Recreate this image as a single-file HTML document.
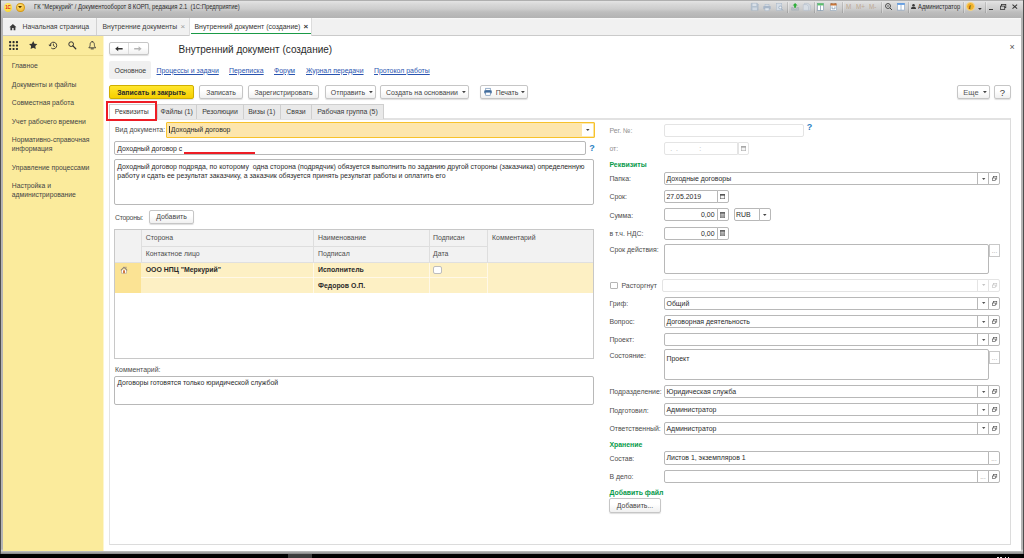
<!DOCTYPE html><html lang="ru"><head><meta charset="utf-8"><title>Внутренний документ (создание)</title><style>
*{box-sizing:border-box;margin:0;padding:0}
html,body{width:1024px;height:558px;overflow:hidden;background:#000}
body{font-family:"Liberation Sans",sans-serif;font-size:6.93px;color:#333;position:relative}
.a{position:absolute;white-space:nowrap}
.t{position:absolute;white-space:nowrap;line-height:10px;height:10px}
.inp{position:absolute;border:1px solid #b8b8b8;border-radius:2px;background:#fff;height:13px;line-height:11px;padding-left:1.5px;white-space:nowrap;overflow:hidden;color:#2b2b2b}
.btn{position:absolute;border:1px solid #c6c6c6;border-radius:2px;background:linear-gradient(#fff 40%,#f0f0f0);height:14px;line-height:12px;text-align:center;white-space:nowrap;color:#444;box-shadow:0 1px 1px rgba(0,0,0,.13)}
.sb{position:absolute;border:1px solid #b8b8b8;background:#fff;height:13px;width:12px;font-size:6px;line-height:8px;text-align:center;color:#555;letter-spacing:.2px}
.lbl{position:absolute;white-space:nowrap;line-height:10px;height:10px;color:#4d4d4d}
.grn{position:absolute;white-space:nowrap;line-height:10px;height:10px;color:#079a4b;font-weight:bold}
.lnk{position:absolute;white-space:nowrap;line-height:10px;height:10px;color:#2a55b0;text-decoration:underline}
.tab{position:absolute;top:104px;height:15px;border:1px solid #cfcfcf;border-bottom:none;background:#e9e9e9;line-height:14px;text-align:center;color:#3a3a3a}
.side{position:absolute;left:11.8px;white-space:nowrap;line-height:8.6px;color:#444;font-size:6.8px}
svg{position:absolute;overflow:visible}
</style></head><body>
<div class="a" style="left:0;top:0;width:1024px;height:553.5px;background:#4e4e4e"></div>
<div class="a" style="left:1.2px;top:0;width:1021.5px;height:553.5px;background:linear-gradient(#b4b4b4 549px,#cfcfcf 550.5px,#8e8e8e 553.5px)"></div>
<div class="a" style="left:1.2px;top:0;width:1021.5px;height:18.3px;background:linear-gradient(#7a7a7a,#e4e4e4 1px,#d9d9d9 4px,#cdcdcd 9px,#bebebe 12px,#b3b3b3 18px)"></div>
<div class="a" style="left:4px;top:2.5px;width:8px;height:9px;border-radius:50%;background:radial-gradient(circle at 40% 35%,#fff27a,#f8cf1c)"></div>
<div class="t" style="left:5.2px;top:2.9px;font-size:4.5px;font-weight:bold;color:#e0201c;letter-spacing:-.3px">1С</div>
<div class="a" style="left:16px;top:2.5px;width:8.5px;height:9px;border-radius:50%;background:radial-gradient(circle at 40% 30%,#ffe27a,#efaf22);border:.5px solid #d39a1a"></div>
<svg style="left:18.3px;top:6.1px" width="4" height="2.3" viewBox="0 0 4 2.3"><path d="M0 0 H4 L2 2.3 Z" fill="#4a3000"/></svg>
<div class="t" style="left:33.5px;top:2px;font-size:7px;color:#2a2a2a;transform-origin:0 50%;transform:scaleX(.838)">ГК "Меркурий" / Документооборот 8 КОРП, редакция 2.1&nbsp; (1С:Предприятие)</div>
<div class="t" style="left:918.2px;top:2px;font-size:7px;color:#2a2a2a;transform-origin:0 50%;transform:scaleX(.835)">Администратор</div>
<svg style="left:751px;top:3.4px" width="7.4" height="7.5" viewBox="0 0 15 15"><path d="M.5 .5 H12.5 L14.5 2.5 V14.5 H.5 Z" fill="#b4c1cf" stroke="#9eb0c2"/><rect x="3" y="1" width="8" height="5" fill="#d9e0e8"/><rect x="3" y="9" width="9" height="5.5" fill="#cfd8e2"/></svg>
<svg style="left:763px;top:3.8px" width="8" height="7" viewBox="0 0 16 14"><rect x="4" y=".5" width="8" height="4" fill="#d3dbe4" stroke="#a9b7c7"/><rect x=".5" y="4" width="15" height="6.5" rx="1.5" fill="#a7b6c8"/><rect x="4" y="8" width="8" height="5.5" fill="#dfe5eb" stroke="#a9b7c7"/></svg>
<svg style="left:776px;top:3.4px" width="7.5" height="8" viewBox="0 0 15 16"><rect x=".5" y=".5" width="11" height="14" fill="#d5dde6" stroke="#a9b7c7"/><circle cx="8.5" cy="9" r="3" fill="#e8edf2" stroke="#8fa2b6" stroke-width="1.3"/><path d="M10.8 11.5 L14 15" stroke="#8fa2b6" stroke-width="1.7"/></svg>
<div class="a" style="left:786.5px;top:2px;width:1px;height:11px;background:rgba(0,0,0,.13);box-shadow:1px 0 0 rgba(255,255,255,.3)"></div>
<svg style="left:790.5px;top:3px" width="8.2" height="8" viewBox="0 0 16 16"><path d="M1 9 V14.5 H15 V9 L12 9 L10.5 12 H5.5 L4 9 Z" fill="#b9bfc6" stroke="#9aa3ad" stroke-width=".8"/><path d="M8 0 L13 5 H10 V9.5 H6 V5 H3 Z" fill="#2fae3b"/></svg>
<svg style="left:802.5px;top:3.4px" width="8" height="7.6" viewBox="0 0 16 15"><path d="M3 .5 H10 L15 5 V14.5 H3 Z" fill="#cfd6de" stroke="#b3bdc8"/><path d="M.5 3 H7 L11 7 V14.5 H.5 Z" fill="#d8dee5" stroke="#b3bdc8"/></svg>
<div class="a" style="left:814px;top:2px;width:1px;height:11px;background:rgba(0,0,0,.13);box-shadow:1px 0 0 rgba(255,255,255,.3)"></div>
<svg style="left:817px;top:3px" width="7" height="7.8" viewBox="0 0 14 16"><rect x=".6" y=".6" width="12.8" height="14.8" fill="#fff" stroke="#6f8ba3" stroke-width="1.2"/><rect x=".6" y=".6" width="12.8" height="4.4" fill="#5cc06a"/><path d="M7 5 V15.4" stroke="#6f8ba3" stroke-width="1.4"/></svg>
<svg style="left:830px;top:3px" width="7" height="7.8" viewBox="0 0 14 16"><rect x=".6" y="1.6" width="12.8" height="13.8" fill="#fff" stroke="#8aa0b6" stroke-width="1.2"/><rect x=".6" y="1" width="12.8" height="4.2" fill="#c9773a"/><path d="M4 7 V12 H10 V7" fill="none" stroke="#6f8ba3" stroke-width="1.4"/><path d="M3.5 0 V2.5 M10.5 0 V2.5" stroke="#a0551f" stroke-width="1.3"/></svg>
<div class="a" style="left:841.5px;top:2px;width:1px;height:11px;background:rgba(0,0,0,.13);box-shadow:1px 0 0 rgba(255,255,255,.3)"></div>
<div class="t" style="left:845.8px;top:2px;font-size:7px;color:#bfa992;transform-origin:0 50%;transform:scaleX(.9)">M</div>
<div class="t" style="left:856.4px;top:2px;font-size:7px;color:#bfa992;transform-origin:0 50%;transform:scaleX(.9)">M+</div>
<div class="t" style="left:868.8px;top:2px;font-size:7px;color:#bfa992;transform-origin:0 50%;transform:scaleX(.9)">M-</div>
<div class="a" style="left:880.5px;top:2px;width:1px;height:11px;background:rgba(0,0,0,.13);box-shadow:1px 0 0 rgba(255,255,255,.3)"></div>
<svg style="left:884.5px;top:3px" width="7.5" height="7.5" viewBox="0 0 15 15"><circle cx="6" cy="6" r="4.8" fill="#fff" stroke="#3a3a3a" stroke-width="2"/><path d="M3.5 6 H8.5 M6 3.5 V8.5" stroke="#444" stroke-width="1.3"/><path d="M10 10 L14 14" stroke="#444" stroke-width="2"/></svg>
<svg style="left:896.6px;top:3px" width="8" height="7.4" viewBox="0 0 16 15"><rect x=".6" y=".6" width="14.8" height="13.8" fill="#fff" stroke="#7f9dc0" stroke-width="1.2"/><rect x=".6" y=".6" width="14.8" height="3" fill="#4a90e2"/><path d="M8 3 V14.4" stroke="#7f9dc0" stroke-width="1.4"/></svg>
<div class="a" style="left:908px;top:2px;width:1px;height:11px;background:rgba(0,0,0,.13);box-shadow:1px 0 0 rgba(255,255,255,.3)"></div>
<svg style="left:911.3px;top:4px" width="5" height="5" viewBox="0 0 10 10"><circle cx="5" cy="2.6" r="2.5" fill="#3a3a3a"/><path d="M0 10 C0 6 2 5.5 5 5.5 C8 5.5 10 6 10 10 Z" fill="#3a3a3a"/></svg>
<div class="a" style="left:963.3px;top:2px;width:1px;height:11px;background:rgba(0,0,0,.13);box-shadow:1px 0 0 rgba(255,255,255,.3)"></div>
<div class="a" style="left:965.8px;top:2.4px;width:8.8px;height:8.8px;border-radius:50%;background:#f0b12c;border:1px solid #f7d88a"></div>
<div class="t" style="left:968.8px;top:1.8px;font-size:7px;font-weight:bold;font-family:'Liberation Serif',serif;font-style:italic;color:#6b4a10">i</div>
<svg style="left:977.6px;top:7.8px" width="3.8" height="2.1" viewBox="0 0 3.8 2.1"><path d="M0 0 H3.8 L1.9 2.1 Z" fill="#333"/></svg>
<div class="a" style="left:984.8px;top:2px;width:1px;height:11px;background:rgba(0,0,0,.13);box-shadow:1px 0 0 rgba(255,255,255,.3)"></div>
<div class="a" style="left:988.6px;top:8.5px;width:4.8px;height:1.1px;background:#333"></div>
<svg style="left:1000px;top:3.7px" width="6.2" height="6" viewBox="0 0 12.4 12"><rect x="3" y=".8" width="8.6" height="6.5" fill="none" stroke="#333" stroke-width="1.6"/><rect x=".8" y="4.2" width="8.6" height="7" fill="#c9c9c9" stroke="#333" stroke-width="1.6"/></svg>
<svg style="left:1011.8px;top:4px" width="5.6" height="5.2" viewBox="0 0 11 10"><path d="M1 1 L10 9 M10 1 L1 9" stroke="#333" stroke-width="2"/></svg>
<div class="a" style="left:3px;top:18.3px;width:1018px;height:17px;background:linear-gradient(#fafafa,#f1f1f1 2px)"></div>
<div class="a" style="left:3px;top:35px;width:1018px;height:1px;background:#cacaca"></div>
<svg style="left:9.3px;top:23.8px" width="7.8" height="6.2" viewBox="0 0 16 14"><path d="M8 0 L16 7.2 L13.6 7.2 L13.6 14 L9.6 14 L9.6 9.2 L6.4 9.2 L6.4 14 L2.4 14 L2.4 7.2 L0 7.2 Z" fill="#3a3a3a"/></svg>
<div class="t" style="left:22.5px;top:22.2px;color:#3a3a3a;font-size:6.9px">Начальная страница</div>
<div class="a" style="left:96px;top:18px;width:1px;height:17px;background:#d2d2d2"></div>
<div class="t" style="left:102.5px;top:22.2px;color:#3a3a3a;font-size:6.9px">Внутренние документы</div>
<div class="t" style="left:180.5px;top:21.5px;color:#9a9a9a;font-size:8px">×</div>
<div class="a" style="left:189px;top:18px;width:123px;height:18px;background:#fff;border-left:1px solid #dcdcdc;border-right:1px solid #dcdcdc"></div>
<div class="a" style="left:191px;top:33px;width:120px;height:1.3px;background:#1a9a46"></div>
<div class="t" style="left:194.5px;top:22.2px;color:#333;font-size:6.9px">Внутренний документ (создание)</div>
<div class="t" style="left:303.6px;top:21.5px;color:#333;font-size:8px;font-weight:bold">×</div>
<div class="a" style="left:3px;top:36px;width:99.5px;height:514.5px;background:#fbeb9c"></div>
<div class="a" style="left:102.5px;top:36px;width:1px;height:514.5px;background:#fdf6cf"></div>
<div class="a" style="left:3px;top:55px;width:99.5px;height:1px;background:#ead886"></div>
<svg style="left:8.8px;top:41.2px" width="9" height="9" viewBox="0 0 9 9"><rect x="0.1" y="0.1" width="2.1" height="2.1" rx=".7" fill="#2e2e2e"/><rect x="3.5" y="0.1" width="2.1" height="2.1" rx=".7" fill="#2e2e2e"/><rect x="6.8999999999999995" y="0.1" width="2.1" height="2.1" rx=".7" fill="#2e2e2e"/><rect x="0.1" y="3.5" width="2.1" height="2.1" rx=".7" fill="#2e2e2e"/><rect x="3.5" y="3.5" width="2.1" height="2.1" rx=".7" fill="#2e2e2e"/><rect x="6.8999999999999995" y="3.5" width="2.1" height="2.1" rx=".7" fill="#2e2e2e"/><rect x="0.1" y="6.8999999999999995" width="2.1" height="2.1" rx=".7" fill="#2e2e2e"/><rect x="3.5" y="6.8999999999999995" width="2.1" height="2.1" rx=".7" fill="#2e2e2e"/><rect x="6.8999999999999995" y="6.8999999999999995" width="2.1" height="2.1" rx=".7" fill="#2e2e2e"/></svg>
<svg style="left:29px;top:41.4px" width="8.4" height="8" viewBox="0 0 24 23"><path d="M12 0l3.7 7.6 8.3 1.2-6 5.9 1.4 8.3-7.4-3.9-7.4 3.9 1.4-8.3-6-5.9 8.3-1.2z" fill="#333"/></svg>
<svg style="left:47.5px;top:41.3px" width="9.5" height="9" viewBox="0 0 19 18"><path d="M4.2 9 A6.6 6.6 0 1 1 6.5 14" fill="none" stroke="#333" stroke-width="1.9"/><path d="M0.8 7.5 L4.2 11.2 L7.6 7.5 Z" fill="#333"/><path d="M10.8 5.2 V9.4 L13.8 11.2" fill="none" stroke="#333" stroke-width="1.7"/></svg>
<svg style="left:68.2px;top:41.4px" width="8.5" height="8.5" viewBox="0 0 17 17"><circle cx="6.3" cy="6.3" r="4.7" fill="none" stroke="#333" stroke-width="2"/><path d="M9.8 9.8 L15.5 15.5" stroke="#333" stroke-width="2.6" stroke-linecap="round"/></svg>
<svg style="left:87.8px;top:41.2px" width="8.5" height="9.2" viewBox="0 0 17 18.4"><path d="M8.5 1.5 C5.3 1.5 4.3 4.3 4.3 7 C4.3 10.5 3.3 11.8 1.6 13.6 L15.4 13.6 C13.7 11.8 12.7 10.5 12.7 7 C12.7 4.3 11.7 1.5 8.5 1.5 Z" fill="none" stroke="#333" stroke-width="1.7" stroke-linejoin="round"/><path d="M6.3 15.8 H10.7" stroke="#333" stroke-width="1.9" stroke-linecap="round"/><circle cx="8.5" cy="1.3" r="1.1" fill="#333"/></svg>
<div class="side" style="top:61.8px">Главное</div>
<div class="side" style="top:80.6px">Документы и файлы</div>
<div class="side" style="top:99.2px">Совместная работа</div>
<div class="side" style="top:117.8px">Учет рабочего времени</div>
<div class="side" style="top:136.4px">Нормативно-справочная<br>информация</div>
<div class="side" style="top:163.6px">Управление процессами</div>
<div class="side" style="top:182px">Настройка и<br>администрирование</div>
<div class="a" style="left:103.5px;top:36px;width:917.5px;height:514.5px;background:#fff"></div>
<div class="btn" style="left:109px;top:42px;width:39.5px;height:13px"></div>
<div class="a" style="left:128px;top:43px;width:1px;height:11px;background:#dcdcdc"></div>
<svg style="left:114.7px;top:45.7px" width="7.8" height="5.6" viewBox="0 0 16 12"><path d="M0 6 L6.5 0.5 V4.3 H16 V7.7 H6.5 V11.5 Z" fill="#333"/></svg>
<svg style="left:134.2px;top:45.7px" width="7.8" height="5.6" viewBox="0 0 16 12"><path d="M16 6 L9.5 0.5 V4.3 H0 V7.7 H9.5 V11.5 Z" fill="#b5b5b5"/></svg>
<div class="t" style="left:178.5px;top:42.5px;font-size:10px;line-height:14px;height:14px;color:#2a2a2a">Внутренний документ (создание)</div>
<div class="t" style="left:1009.4px;top:41.8px;font-size:9px;color:#555">×</div>
<div class="a" style="left:109px;top:61px;width:42px;height:18px;background:#f0f0f0;border-radius:2px"></div>
<div class="t" style="left:114.5px;top:65.5px;color:#3a3a3a">Основное</div>
<div class="lnk" style="left:156.5px;top:65.5px">Процессы и задачи</div>
<div class="lnk" style="left:229px;top:65.5px">Переписка</div>
<div class="lnk" style="left:274px;top:65.5px">Форум</div>
<div class="lnk" style="left:306px;top:65.5px">Журнал передачи</div>
<div class="lnk" style="left:374px;top:65.5px">Протокол работы</div>
<div class="btn" style="left:109px;top:85px;width:85px;height:14px;line-height:13px;background:linear-gradient(#ffe62e,#f6cf00);border-color:#cfae00;font-weight:bold;color:#2a2a2a">Записать и закрыть</div>
<div class="btn" style="left:199px;top:85px;width:44px;height:14px;line-height:13px">Записать</div>
<div class="btn" style="left:248px;top:85px;width:71px;height:14px;line-height:13px">Зарегистрировать</div>
<div class="btn" style="left:325px;top:85px;width:51px;height:14px;line-height:13px;padding-right:5px">Отправить</div>
<svg style="left:369px;top:91.2px" width="3.8" height="2.2" viewBox="0 0 3.8 2.2"><path d="M0 0 H3.8 L1.9 2.2 Z" fill="#444"/></svg>
<div class="btn" style="left:380px;top:85px;width:89px;height:14px;line-height:13px;padding-right:5px">Создать на основании</div>
<svg style="left:462px;top:91.2px" width="3.8" height="2.2" viewBox="0 0 3.8 2.2"><path d="M0 0 H3.8 L1.9 2.2 Z" fill="#444"/></svg>
<div class="btn" style="left:480px;top:85px;width:48px;height:14px;line-height:13px;padding-right:5px;padding-left:11px">Печать</div>
<svg style="left:521px;top:91.2px" width="3.8" height="2.2" viewBox="0 0 3.8 2.2"><path d="M0 0 H3.8 L1.9 2.2 Z" fill="#444"/></svg>
<div class="btn" style="left:957px;top:85px;width:33px;height:14px;line-height:13px;padding-right:5px"><span style="font-size:7.5px;color:#555">Еще</span></div>
<svg style="left:983px;top:91.2px" width="3.8" height="2.2" viewBox="0 0 3.8 2.2"><path d="M0 0 H3.8 L1.9 2.2 Z" fill="#444"/></svg>
<div class="btn" style="left:994px;top:85px;width:17px;height:14px;line-height:13px"><span style="font-size:9.5px;color:#3a3a3a;line-height:13px;display:block">?</span></div>
<svg style="left:483.8px;top:88.2px" width="8" height="7.5" viewBox="0 0 16 15"><rect x="3.5" y="0.5" width="9" height="4.5" fill="#fff" stroke="#5a7fa8" stroke-width="1.2"/><rect x="0.5" y="4.5" width="15" height="6.5" rx="1.5" fill="#3f6b9c"/><rect x="3.5" y="8.5" width="9" height="6" fill="#fff" stroke="#5a7fa8" stroke-width="1.2"/></svg>
<div class="a" style="left:109px;top:118px;width:902px;height:427px;border:1px solid #dcdcdc;border-left-color:#e4e4e4;border-top:2px solid #e2e2e2;background:#fff"></div>
<div class="tab" style="left:156.5px;width:40.5px">Файлы (1)</div>
<div class="tab" style="left:196px;width:48px">Резолюции</div>
<div class="tab" style="left:242.5px;width:38.5px">Визы (1)</div>
<div class="tab" style="left:279.5px;width:33px">Связи</div>
<div class="tab" style="left:311px;width:73px">Рабочая группа (5)</div>
<div class="a" style="left:109px;top:104px;width:48px;height:16px;background:#fff;border:1px solid #cfcfcf;border-bottom:none;line-height:14px;text-align:center;color:#3a3a3a;padding-right:2.5px">Реквизиты</div>
<div class="a" style="left:105.8px;top:101px;width:50.8px;height:20.3px;border:2px solid #ee1c25"></div>
<div class="lbl" style="left:115px;top:125px">Вид документа:</div>
<div class="a" style="left:166px;top:122px;width:428.5px;height:16px;border:1px solid #f7c22c;box-shadow:inset 0 0 0 .6px #f9d467;background:#fff;border-radius:1px"></div>
<div class="a" style="left:167.3px;top:123.3px;width:415px;height:13.5px;background:#fde6ad;line-height:13.5px;padding-left:2px;color:#2b2b2b"><span style="border-left:1px solid #333;padding-left:.5px">Доходный договор</span></div>
<svg style="left:586px;top:129.3px" width="3.6" height="2.1" viewBox="0 0 3.6 2.1"><path d="M0 0 H3.6 L1.8 2.1 Z" fill="#444"/></svg>
<div class="inp" style="left:114px;top:141px;width:472px;height:14px;line-height:13px;padding-left:2.3px">Доходный договор с</div>
<div class="a" style="left:184px;top:152.1px;width:71px;height:1.6px;background:#ee1c25"></div>
<div class="t" style="left:589.3px;top:143px;color:#2a80c2;font-weight:bold;font-size:9px">?</div>
<div class="inp" style="left:114px;top:159px;width:480px;height:46px;white-space:normal;line-height:8.3px;padding-top:3.3px;padding-left:2.3px">Доходный договор подряда, по которому&nbsp; одна сторона (подрядчик) обязуется выполнить по заданию другой стороны (заказчика) определенную<br>работу и сдать ее результат заказчику, а заказчик обязуется принять результат работы и оплатить его</div>
<div class="lbl" style="left:115px;top:212.5px;letter-spacing:-.3px">Стороны:</div>
<div class="btn" style="left:149px;top:210px;width:45px;height:14px;line-height:12px">Добавить</div>
<div class="a" style="left:114px;top:229px;width:480px;height:130px;border:1px solid #c8c8c8;background:#fff"></div>
<div class="a" style="left:115px;top:230px;width:478px;height:32.2px;background:#f2f2f2"></div>
<div class="a" style="left:115px;top:262px;width:478px;height:31px;background:#fdf0c4"></div>
<div class="a" style="left:115px;top:262px;width:26px;height:31px;background:#fbe394"></div>
<div class="a" style="left:141px;top:230px;width:1px;height:32.2px;background:#dedede"></div>
<div class="a" style="left:313px;top:230px;width:1px;height:32.2px;background:#dedede"></div>
<div class="a" style="left:313px;top:262px;width:1px;height:31px;background:#fffaf0;opacity:.8"></div>
<div class="a" style="left:428.5px;top:230px;width:1px;height:32.2px;background:#dedede"></div>
<div class="a" style="left:428.5px;top:262px;width:1px;height:31px;background:#fffaf0;opacity:.8"></div>
<div class="a" style="left:487px;top:230px;width:1px;height:32.2px;background:#dedede"></div>
<div class="a" style="left:487px;top:262px;width:1px;height:31px;background:#fffaf0;opacity:.8"></div>
<div class="a" style="left:141px;top:245.5px;width:346px;height:1px;background:#dedede"></div>
<div class="a" style="left:115px;top:261.7px;width:478px;height:1px;background:#e0e0e0"></div>
<div class="a" style="left:141px;top:277px;width:346px;height:1px;background:#fffaf0;opacity:.8"></div>
<div class="lbl" style="left:145.7px;top:232.5px">Сторона</div>
<div class="lbl" style="left:145.7px;top:248.5px">Контактное лицо</div>
<div class="lbl" style="left:318px;top:232.5px">Наименование</div>
<div class="lbl" style="left:318px;top:248.5px">Подписал</div>
<div class="lbl" style="left:433px;top:232.5px">Подписан</div>
<div class="lbl" style="left:433px;top:248.5px">Дата</div>
<div class="lbl" style="left:492px;top:232.5px">Комментарий</div>
<div class="t" style="left:145.7px;top:265.3px;font-weight:bold;color:#2a2a2a">ООО НПЦ "Меркурий"</div>
<div class="t" style="left:318px;top:265.3px;font-weight:bold;color:#2a2a2a">Исполнитель</div>
<div class="t" style="left:318px;top:281px;font-weight:bold;color:#2a2a2a">Федоров О.П.</div>
<svg style="left:119.8px;top:266px" width="8" height="7.8" viewBox="0 0 16 15.6"><path d="M3 7.5 V14.5 H13 V7.5" fill="#fff" stroke="#a89f98" stroke-width="1.3"/><path d="M8 1.2 L15 8 L13.6 9.3 L8 3.8 L2.4 9.3 L1 8 Z" fill="#8b7f79"/><rect x="6.2" y="8.5" width="3.6" height="6" fill="#cf6a2c"/><rect x="11" y="1.5" width="1.8" height="3.5" fill="#8b7f79"/></svg>
<div class="a" style="left:433.3px;top:265.8px;width:8.4px;height:8px;border:1px solid #bdbdbd;border-radius:2px;background:#fff"></div>
<div class="lbl" style="left:115px;top:365px">Комментарий:</div>
<div class="inp" style="left:114px;top:376px;width:480px;height:28.5px;padding-left:2.3px;white-space:normal;line-height:8.3px;padding-top:2px">Договоры готовятся только юридической службой</div>
<div class="lbl" style="left:609.4px;top:126.1px;color:#909090">Рег. №:</div>
<div class="inp" style="left:664px;top:123.5px;width:139.5px;border-color:#e4e4e4"></div>
<div class="t" style="left:806.8px;top:122px;color:#2a80c2;font-weight:bold;font-size:9px">?</div>
<div class="lbl" style="left:609.4px;top:144.4px;color:#909090">от:</div>
<div class="inp" style="left:664px;top:142px;width:74px;border-color:#e4e4e4;color:#b5b5b5;border-radius:2px 0 0 2px">&nbsp;&nbsp;.&nbsp;&nbsp;.&nbsp;&nbsp;&nbsp;&nbsp;&nbsp;&nbsp;&nbsp;&nbsp;&nbsp;&nbsp;&nbsp;:</div>
<div class="sb" style="left:737.5px;top:142px;width:11.5px;border-color:#e4e4e4;border-radius:0 2px 2px 0"></div>
<svg style="left:740.7px;top:146px" width="5" height="5" viewBox="0 0 11 11"><rect x=".6" y=".6" width="9.8" height="9.8" fill="#f4f4f4" stroke="#a8a8a8" stroke-width="1.2"/><rect x="0" y="0" width="11" height="3.6" fill="#a8a8a8"/></svg>
<div class="grn" style="left:609.4px;top:159.5px">Реквизиты</div>
<div class="lbl" style="left:609.4px;top:174.4px">Папка:</div>
<div class="inp" style="left:664px;top:172px;width:314px;border-color:#b8b8b8;border-radius:2px 0 0 2px">Доходные договоры</div>
<div class="sb" style="left:977px;top:172px;width:12px;border-color:#b8b8b8;color:#666;line-height:13px"></div>
<svg style="left:981.5px;top:177.5px" width="3.4" height="2" viewBox="0 0 3.4 2"><path d="M0 0 H3.4 L1.7 2 Z" fill="#555"/></svg>
<div class="sb" style="left:988px;top:172px;width:12px;border-color:#b8b8b8;border-radius:0 2px 2px 0"></div>
<svg style="left:991.5px;top:176px" width="5.2" height="5.2" viewBox="0 0 12 12"><rect x="3.8" y="1" width="7.2" height="6.2" fill="none" stroke="#555" stroke-width="1.5"/><rect x="1" y="4.6" width="6.6" height="6.2" fill="#fff" stroke="#555" stroke-width="1.5"/></svg>
<div class="lbl" style="left:609.4px;top:192.4px">Срок:</div>
<div class="inp" style="left:664px;top:190px;width:53.5px;border-radius:2px 0 0 2px">27.05.2019</div>
<div class="sb" style="left:717px;top:190px;width:11.5px;border-color:#b8b8b8;border-radius:0 2px 2px 0"></div>
<svg style="left:720.2px;top:194px" width="5" height="5" viewBox="0 0 11 11"><rect x=".6" y=".6" width="9.8" height="9.8" fill="#f4f4f4" stroke="#555" stroke-width="1.2"/><rect x="0" y="0" width="11" height="3.6" fill="#555"/></svg>
<div class="lbl" style="left:609.4px;top:210.8px">Сумма:</div>
<div class="inp" style="left:664px;top:208.4px;width:53.5px;text-align:right;padding-right:2px;border-radius:2px 0 0 2px">0,00</div>
<div class="sb" style="left:717px;top:208.4px;width:11.5px;border-color:#b8b8b8;border-radius:0 2px 2px 0"></div>
<svg style="left:720.2px;top:211.9px" width="5" height="6" viewBox="0 0 10 12"><rect x=".6" y=".6" width="8.8" height="10.8" fill="#ddd" stroke="#666" stroke-width="1.2"/><rect x="0" y="0" width="10" height="3.5" fill="#666"/><path d="M3.5 4 V11 M6.5 4 V11 M1 6.5 H9 M1 9 H9" stroke="#666" stroke-width=".7"/></svg>
<div class="inp" style="left:733.5px;top:208.4px;width:26.5px;border-radius:2px 0 0 2px">RUB</div>
<div class="sb" style="left:759px;top:208.4px;width:12px;border-radius:0 2px 2px 0"></div>
<svg style="left:763.4px;top:213.8px" width="3.6" height="2.1" viewBox="0 0 3.6 2.1"><path d="M0 0 H3.6 L1.8 2.1 Z" fill="#444"/></svg>
<div class="lbl" style="left:609.4px;top:229px">в т.ч. НДС:</div>
<div class="inp" style="left:664px;top:226.6px;width:53.5px;text-align:right;padding-right:2px;border-radius:2px 0 0 2px">0,00</div>
<div class="sb" style="left:717px;top:226.6px;width:11.5px;border-color:#b8b8b8;border-radius:0 2px 2px 0"></div>
<svg style="left:720.2px;top:230.1px" width="5" height="6" viewBox="0 0 10 12"><rect x=".6" y=".6" width="8.8" height="10.8" fill="#ddd" stroke="#666" stroke-width="1.2"/><rect x="0" y="0" width="10" height="3.5" fill="#666"/><path d="M3.5 4 V11 M6.5 4 V11 M1 6.5 H9 M1 9 H9" stroke="#666" stroke-width=".7"/></svg>
<div class="lbl" style="left:609.4px;top:244.6px">Срок действия:</div>
<div class="inp" style="left:664px;top:244px;width:325px;height:30px"></div>
<div class="sb" style="left:989px;top:244px;height:13px;width:11px;border-color:#c8c8c8;color:#777;line-height:13px">...</div>
<div class="a" style="left:610.2px;top:281.5px;width:7.5px;height:7.5px;border:1px solid #b5b5b5;border-radius:1px;background:#fff"></div>
<div class="lbl" style="left:621.4px;top:280.8px">Расторгнут</div>
<div class="inp" style="left:662px;top:278.5px;width:316px;border-color:#e4e4e4;border-radius:2px 0 0 2px"></div>
<div class="sb" style="left:977px;top:278.5px;width:12px;border-color:#e4e4e4;color:#666;line-height:13px"></div>
<svg style="left:981.5px;top:284px" width="3.4" height="2" viewBox="0 0 3.4 2"><path d="M0 0 H3.4 L1.7 2 Z" fill="#c4c4c4"/></svg>
<div class="sb" style="left:988px;top:278.5px;width:12px;border-color:#e4e4e4;border-radius:0 2px 2px 0"></div>
<svg style="left:991.5px;top:282.5px" width="5.2" height="5.2" viewBox="0 0 12 12"><rect x="3.8" y="1" width="7.2" height="6.2" fill="none" stroke="#c4c4c4" stroke-width="1.5"/><rect x="1" y="4.6" width="6.6" height="6.2" fill="#fff" stroke="#c4c4c4" stroke-width="1.5"/></svg>
<div class="lbl" style="left:609.4px;top:299px">Гриф:</div>
<div class="inp" style="left:664px;top:296.6px;width:314px;border-color:#b8b8b8;border-radius:2px 0 0 2px">Общий</div>
<div class="sb" style="left:977px;top:296.6px;width:12px;border-color:#b8b8b8;color:#666;line-height:13px"></div>
<svg style="left:981.5px;top:302.1px" width="3.4" height="2" viewBox="0 0 3.4 2"><path d="M0 0 H3.4 L1.7 2 Z" fill="#555"/></svg>
<div class="sb" style="left:988px;top:296.6px;width:12px;border-color:#b8b8b8;border-radius:0 2px 2px 0"></div>
<svg style="left:991.5px;top:300.6px" width="5.2" height="5.2" viewBox="0 0 12 12"><rect x="3.8" y="1" width="7.2" height="6.2" fill="none" stroke="#555" stroke-width="1.5"/><rect x="1" y="4.6" width="6.6" height="6.2" fill="#fff" stroke="#555" stroke-width="1.5"/></svg>
<div class="lbl" style="left:609.4px;top:317.4px">Вопрос:</div>
<div class="inp" style="left:664px;top:315px;width:314px;border-color:#b8b8b8;border-radius:2px 0 0 2px">Договорная деятельность</div>
<div class="sb" style="left:977px;top:315px;width:12px;border-color:#b8b8b8;color:#666;line-height:13px"></div>
<svg style="left:981.5px;top:320.5px" width="3.4" height="2" viewBox="0 0 3.4 2"><path d="M0 0 H3.4 L1.7 2 Z" fill="#555"/></svg>
<div class="sb" style="left:988px;top:315px;width:12px;border-color:#b8b8b8;border-radius:0 2px 2px 0"></div>
<svg style="left:991.5px;top:319px" width="5.2" height="5.2" viewBox="0 0 12 12"><rect x="3.8" y="1" width="7.2" height="6.2" fill="none" stroke="#555" stroke-width="1.5"/><rect x="1" y="4.6" width="6.6" height="6.2" fill="#fff" stroke="#555" stroke-width="1.5"/></svg>
<div class="lbl" style="left:609.4px;top:335.4px">Проект:</div>
<div class="inp" style="left:664px;top:333px;width:314px;border-color:#b8b8b8;border-radius:2px 0 0 2px"></div>
<div class="sb" style="left:977px;top:333px;width:12px;border-color:#b8b8b8;color:#666;line-height:13px"></div>
<svg style="left:981.5px;top:338.5px" width="3.4" height="2" viewBox="0 0 3.4 2"><path d="M0 0 H3.4 L1.7 2 Z" fill="#555"/></svg>
<div class="sb" style="left:988px;top:333px;width:12px;border-color:#b8b8b8;border-radius:0 2px 2px 0"></div>
<svg style="left:991.5px;top:337px" width="5.2" height="5.2" viewBox="0 0 12 12"><rect x="3.8" y="1" width="7.2" height="6.2" fill="none" stroke="#555" stroke-width="1.5"/><rect x="1" y="4.6" width="6.6" height="6.2" fill="#fff" stroke="#555" stroke-width="1.5"/></svg>
<div class="lbl" style="left:609.4px;top:351.1px">Состояние:</div>
<div class="inp" style="left:664px;top:349px;width:324.5px;height:30.5px;padding-top:2.5px">Проект</div>
<div class="sb" style="left:989px;top:351px;height:13px;width:11px;border-color:#c8c8c8;color:#777;line-height:13px">...</div>
<div class="lbl" style="left:609.4px;top:387.4px">Подразделение:</div>
<div class="inp" style="left:664px;top:385px;width:314px;border-color:#b8b8b8;border-radius:2px 0 0 2px">Юридическая служба</div>
<div class="sb" style="left:977px;top:385px;width:12px;border-color:#b8b8b8;color:#666;line-height:13px"></div>
<svg style="left:981.5px;top:390.5px" width="3.4" height="2" viewBox="0 0 3.4 2"><path d="M0 0 H3.4 L1.7 2 Z" fill="#555"/></svg>
<div class="sb" style="left:988px;top:385px;width:12px;border-color:#b8b8b8;border-radius:0 2px 2px 0"></div>
<svg style="left:991.5px;top:389px" width="5.2" height="5.2" viewBox="0 0 12 12"><rect x="3.8" y="1" width="7.2" height="6.2" fill="none" stroke="#555" stroke-width="1.5"/><rect x="1" y="4.6" width="6.6" height="6.2" fill="#fff" stroke="#555" stroke-width="1.5"/></svg>
<div class="lbl" style="left:609.4px;top:405.59999999999997px">Подготовил:</div>
<div class="inp" style="left:664px;top:403.2px;width:314px;border-color:#b8b8b8;border-radius:2px 0 0 2px">Администратор</div>
<div class="sb" style="left:977px;top:403.2px;width:12px;border-color:#b8b8b8;color:#666;line-height:13px"></div>
<svg style="left:981.5px;top:408.7px" width="3.4" height="2" viewBox="0 0 3.4 2"><path d="M0 0 H3.4 L1.7 2 Z" fill="#555"/></svg>
<div class="sb" style="left:988px;top:403.2px;width:12px;border-color:#b8b8b8;border-radius:0 2px 2px 0"></div>
<svg style="left:991.5px;top:407.2px" width="5.2" height="5.2" viewBox="0 0 12 12"><rect x="3.8" y="1" width="7.2" height="6.2" fill="none" stroke="#555" stroke-width="1.5"/><rect x="1" y="4.6" width="6.6" height="6.2" fill="#fff" stroke="#555" stroke-width="1.5"/></svg>
<div class="lbl" style="left:609.4px;top:423.9px">Ответственный:</div>
<div class="inp" style="left:664px;top:421.5px;width:314px;border-color:#b8b8b8;border-radius:2px 0 0 2px">Администратор</div>
<div class="sb" style="left:977px;top:421.5px;width:12px;border-color:#b8b8b8;color:#666;line-height:13px"></div>
<svg style="left:981.5px;top:427px" width="3.4" height="2" viewBox="0 0 3.4 2"><path d="M0 0 H3.4 L1.7 2 Z" fill="#555"/></svg>
<div class="sb" style="left:988px;top:421.5px;width:12px;border-color:#b8b8b8;border-radius:0 2px 2px 0"></div>
<svg style="left:991.5px;top:425.5px" width="5.2" height="5.2" viewBox="0 0 12 12"><rect x="3.8" y="1" width="7.2" height="6.2" fill="none" stroke="#555" stroke-width="1.5"/><rect x="1" y="4.6" width="6.6" height="6.2" fill="#fff" stroke="#555" stroke-width="1.5"/></svg>
<div class="grn" style="left:609.4px;top:439.8px">Хранение</div>
<div class="lbl" style="left:609.4px;top:454.1px">Состав:</div>
<div class="inp" style="left:664px;top:451px;width:325px;height:14px;line-height:12px;border-radius:2px 0 0 2px">Листов 1, экземпляров 1</div>
<div class="sb" style="left:988px;top:451px;width:12px;height:14px;border-radius:0 2px 2px 0;color:#666;line-height:14px">...</div>
<div class="lbl" style="left:609.4px;top:472.4px">В дело:</div>
<div class="inp" style="left:664px;top:470px;width:313.5px;border-radius:2px 0 0 2px"></div>
<div class="sb" style="left:977px;top:470px;width:12px;border-color:#b8b8b8;color:#666;line-height:13px">...</div>
<div class="sb" style="left:988px;top:470px;width:12px;border-color:#b8b8b8;border-radius:0 2px 2px 0"></div>
<svg style="left:991.5px;top:474px" width="5.2" height="5.2" viewBox="0 0 12 12"><rect x="3.8" y="1" width="7.2" height="6.2" fill="none" stroke="#555" stroke-width="1.5"/><rect x="1" y="4.6" width="6.6" height="6.2" fill="#fff" stroke="#555" stroke-width="1.5"/></svg>
<div class="grn" style="left:609.4px;top:487.6px">Добавить файл</div>
<div class="btn" style="left:609px;top:498px;width:52px;height:15px;line-height:13px">Добавить...</div>
<div class="a" style="left:288px;top:554px;width:24px;height:4px;background:#3c3c3c"></div>
<div class="a" style="left:997px;top:556.5px;width:1.5px;height:2px;background:#e8e8e8"></div>
<div class="a" style="left:1000px;top:556.5px;width:1.5px;height:2px;background:#e8e8e8"></div>
<div class="a" style="left:1004.5px;top:556.5px;width:1.5px;height:2px;background:#e8e8e8"></div>
<div class="a" style="left:1007.5px;top:556.5px;width:1.5px;height:2px;background:#e8e8e8"></div>
</body></html>
